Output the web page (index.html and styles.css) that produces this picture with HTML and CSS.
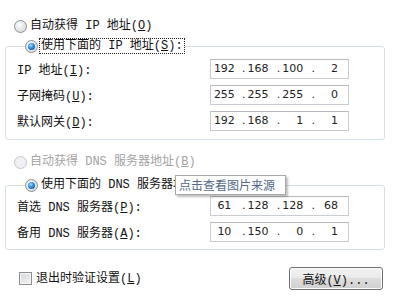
FILE: index.html
```html
<!DOCTYPE html>
<html lang="zh-CN">
<head>
  <meta charset="UTF-8">
  <title>Internet 协议版本 4 (TCP/IPv4) 属性</title>
  <link rel="stylesheet" href="styles.css">
</head>
<body>
  <div class="dialog">
    <div class="choice">
      <span class="radio"></span>
      <span class="caption">自动获得 IP 地址(<u>O</u>)</span>
    </div>

    <fieldset class="group">
      <legend class="choice">
        <span class="radio checked"></span>
        <span class="caption focus">使用下面的 IP 地址(<u>S</u>):</span>
      </legend>
      <div class="field">
        <span class="field-label">IP 地址(<u>I</u>):</span>
        <div class="ip-box">
          <span class="seg">192</span><span class="seg"><i>.</i>168</span><span class="seg"><i>.</i>100</span><span class="seg"><i>.</i>2</span>
        </div>
      </div>
      <div class="field">
        <span class="field-label">子网掩码(<u>U</u>):</span>
        <div class="ip-box">
          <span class="seg">255</span><span class="seg"><i>.</i>255</span><span class="seg"><i>.</i>255</span><span class="seg"><i>.</i>0</span>
        </div>
      </div>
      <div class="field">
        <span class="field-label">默认网关(<u>D</u>):</span>
        <div class="ip-box">
          <span class="seg">192</span><span class="seg"><i>.</i>168</span><span class="seg"><i>.</i>1</span><span class="seg"><i>.</i>1</span>
        </div>
      </div>
    </fieldset>

    <div class="choice disabled spaced">
      <span class="radio"></span>
      <span class="caption">自动获得 DNS 服务器地址(<u>B</u>)</span>
    </div>

    <fieldset class="group dns">
      <legend class="choice">
        <span class="radio checked"></span>
        <span class="caption">使用下面的 DNS 服务器地址(<u>E</u>):</span>
      </legend>
      <div class="field">
        <span class="field-label">首选 DNS 服务器(<u>P</u>):</span>
        <div class="ip-box">
          <span class="seg">61</span><span class="seg"><i>.</i>128</span><span class="seg"><i>.</i>128</span><span class="seg"><i>.</i>68</span>
        </div>
      </div>
      <div class="field">
        <span class="field-label">备用 DNS 服务器(<u>A</u>):</span>
        <div class="ip-box">
          <span class="seg">10</span><span class="seg"><i>.</i>150</span><span class="seg"><i>.</i>0</span><span class="seg"><i>.</i>1</span>
        </div>
      </div>
    </fieldset>

    <div class="footer">
      <div class="choice">
        <span class="checkbox"></span>
        <span class="caption">退出时验证设置(<u>L</u>)</span>
      </div>
      <button class="btn">高级(<u>V</u>)...</button>
    </div>

    <div class="tooltip">点击查看图片来源</div>
  </div>
</body>
</html>
```

FILE: styles.css
```css
body {
  margin: 0;
  background: #fff;
  font-family: "Liberation Mono", "Noto Sans CJK SC", monospace;
  font-size: 12px;
  color: #111;
}

.dialog {
  position: relative;
  width: 390px;
  height: 300px;
  padding: 16px 5px 0 5px;
  box-sizing: border-box;
}

u {
  text-decoration: underline;
  text-underline-offset: 1px;
}

.choice {
  display: flex;
  align-items: center;
  height: 20px;
  padding-left: 9px;
  line-height: 14px;
}

.caption {
  margin-left: 2px;
  padding: 0 1px;
  white-space: nowrap;
}

.caption.focus {
  outline: 1px dotted #222;
  outline-offset: 0;
}

.disabled {
  color: #a3a3a3;
}

.spaced {
  margin-top: 12px;
}

/* radio + checkbox */
.radio {
  width: 11px;
  height: 11px;
  border: 1px solid #8c8f92;
  border-radius: 50%;
  background: radial-gradient(circle at 40% 35%, #fdfdfd 0, #e4e4e4 55%, #cfd1d3 100%);
  position: relative;
  flex: none;
}

.radio.checked::after {
  content: "";
  position: absolute;
  left: 2px;
  top: 2px;
  width: 7px;
  height: 7px;
  border-radius: 50%;
  background: radial-gradient(circle at 40% 35%, #9fdcff 0, #2a8ee0 45%, #0c3f86 100%);
}

.disabled .radio {
  border-color: #c4c6c8;
  background: #f1f1f1;
}

.checkbox {
  width: 11px;
  height: 11px;
  border: 1px solid #8c8f92;
  background: linear-gradient(135deg, #d6d8da, #f4f4f4);
  box-shadow: inset 0 0 0 1px #f6f6f6;
  flex: none;
}

/* group boxes */
.group {
  margin: 2px 0 0 0;
  padding: 2px 0 5px 11px;
  border: 1px solid #d5dfe5;
  border-radius: 3px;
}

.group legend {
  margin-left: 8px;
  padding: 0 1px 0 0;
  height: 16px;
  background: #fff;
  position: relative;
  z-index: 1;
}

.group.dns {
  margin-top: 5px;
  padding-top: 0;
  padding-bottom: 4px;
}

.field {
  display: flex;
  align-items: center;
  height: 26px;
}

.field-label {
  width: 193px;
  white-space: nowrap;
}

.ip-box {
  display: flex;
  width: 135px;
  height: 18px;
  border: 1px solid #c9ccd0;
  border-top-color: #b6b9bd;
  font-family: "DejaVu Sans", "Liberation Sans", sans-serif;
  font-size: 11px;
  line-height: 18px;
  color: #222;
  padding-right: 2px;
}

.seg {
  flex: 1;
  display: flex;
  text-align: center;
}

.seg:first-child {
  justify-content: center;
  padding-right: 4px;
}

.seg:not(:first-child) {
  justify-content: space-between;
  padding-right: 8px;
}

.seg i {
  font-style: normal;
  width: 4px;
}

/* footer */
.footer {
  display: flex;
  justify-content: space-between;
  align-items: center;
  margin-top: 17px;
  padding-right: 2px;
}

.footer .choice {
  padding-left: 14px;
}

.footer .caption {
  margin-left: 3px;
}

.btn {
  width: 94px;
  height: 23px;
  border: 1px solid #707070;
  border-radius: 3px;
  background: linear-gradient(#f2f2f2 0, #ebebeb 45%, #dddddd 50%, #cfcfcf 100%);
  box-shadow: inset 0 0 0 1px #fbfbfb;
  font-family: inherit;
  font-size: 12px;
  color: #111;
  padding: 0;
}

.tooltip {
  position: absolute;
  left: 175px;
  top: 175px;
  width: 106px;
  height: 18px;
  line-height: 18px;
  padding-left: 3px;
  border: 1px solid #a8a8a8;
  background: #fff;
  color: #54688a;
  font-family: "Noto Sans CJK SC", sans-serif;
  box-shadow: 2px 2px 2px rgba(0, 0, 0, 0.25);
  z-index: 2;
  white-space: nowrap;
}
```
